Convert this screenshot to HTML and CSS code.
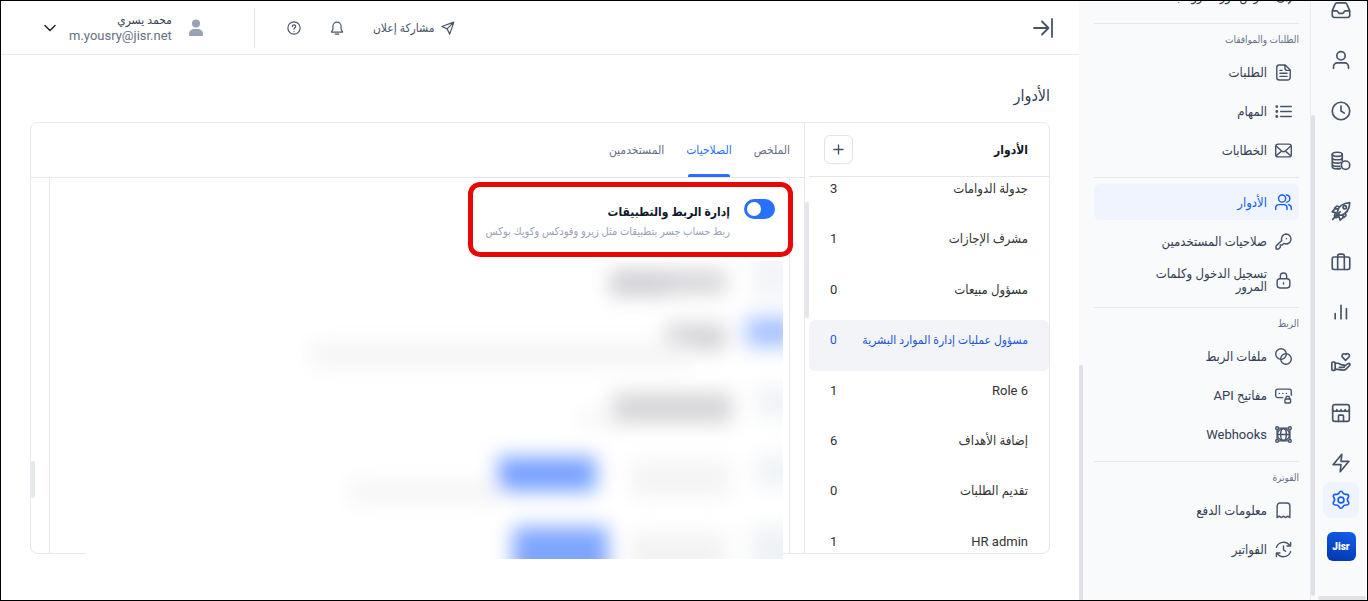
FILE: index.html
```html
<!DOCTYPE html>
<html lang="ar" dir="rtl">
<head>
    <meta charset="UTF-8">
    <meta name="viewport" content="width=device-width, initial-scale=1.0">
    <title>الأدوار</title>
    <link rel="stylesheet" href="styles.css">
</head>
<body>
    <nav class="rail" aria-label="التطبيقات">
        <div class="rail-list">
            <a href="#" aria-label="الوارد"><svg class="icon" viewBox="0 0 24 24"><path d="M1.500 13H7c1.500 0 1.500 3 3 3h4c1.500 0 1.500-3 3-3h5.500M7.500 3.500h9a3 3 0 0 1 2.800 2l3.200 7.500v5a3 3 0 0 1-3 3h-15a3 3 0 0 1-3-3v-5l3.200-7.500a3 3 0 0 1 2.800-2z"/></svg></a>
            <a href="#" aria-label="الموظفون"><svg class="icon" viewBox="0 0 24 24"><circle cx="12" cy="7" r="5"/><path d="M3 22v-2a4.500 4.500 0 0 1 4.500-4.500h9A4.500 4.500 0 0 1 21 20v2"/></svg></a>
            <a href="#" aria-label="الحضور"><svg class="icon" viewBox="0 0 24 24"><circle cx="12" cy="12" r="10.500"/><path d="M12 6v6l4 2.500"/></svg></a>
            <a href="#" aria-label="الرواتب"><svg class="icon" viewBox="0 0 24 24"><ellipse cx="7.500" cy="4" rx="6" ry="2.500"/><path d="M1.500 4v15c0 1.500 2.500 2.500 6 2.500 1.500 0 3-.2 4-.6M13.500 4v8M1.500 8c0 1.500 2.700 2.500 6 2.500s6-1 6-2.500M1.500 12c0 1.500 2.700 2.500 6 2.500 2 0 3.500-.3 4.500-.8M1.500 16c0 1.500 2.700 2.500 6 2.500h3"/><circle cx="17.500" cy="17" r="5"/></svg></a>
            <a href="#" aria-label="الأداء"><svg class="icon" viewBox="0 0 24 24"><path d="M8 12c1-5 6-9.500 14.500-10C22 10 18 15.500 12.500 17L7 17zM8 9.500H4.500L1.500 13l4 1M14.500 16.500V20l-3.500 3-1.500-4.500M9.500 7 7 6 4.500 8.500M17 14.500l1 3-2.500 2M2 22l9-9M5.500 14 4 18M9.500 18.500 6 20"/><circle cx="16.500" cy="7.500" r="2"/></svg></a>
            <a href="#" aria-label="التوظيف"><svg class="icon" viewBox="0 0 24 24"><rect x="1.500" y="6" width="21" height="15" rx="2"/><path d="M8 21V5c0-1.500 1-2.500 2.500-2.500h3C15 2.500 16 3.500 16 5v16"/></svg></a>
            <a href="#" aria-label="التقارير"><svg class="icon" viewBox="0 0 24 24"><path d="M5 20v-6M12 20V4M18.500 20V8"/></svg></a>
            <a href="#" aria-label="المزايا"><svg class="icon" viewBox="0 0 24 24"><rect x="1" y="12" width="4" height="10" rx="1"/><path d="M5 13.500h3c2.500 0 3.500 2 5 2h1.500c2.500 0 2.500 3 0 3H10M16 17l4.500-3c2-1 3 1 1.500 2.500l-4 4c-1 1-2 1.200-3.500 1.200L5 20.500M17.500 10 14 6.500C12 4 15 .5 17.500 3 20 .5 23.500 3.500 21.500 6z"/></svg></a>
            <a href="#" aria-label="المتجر"><svg class="icon" viewBox="0 0 24 24"><rect x="2" y="2" width="20" height="20" rx="2.500"/><path d="M2 8c0 2.500 5 2.500 5 0 0 2.500 5 2.500 5 0 0 2.500 5 2.500 5 0 0 2.500 5 2.500 5 0M9 22v-6.500a1 1 0 0 1 1-1h4a1 1 0 0 1 1 1V22"/></svg></a>
            <a href="#" aria-label="الأتمتة"><svg class="icon" viewBox="0 0 24 24"><path d="M13 1.500 2.500 14H12l-1 8.500L21.500 10H12z"/></svg></a>
        </div>
        <a class="rail-active" href="#" aria-label="الإعدادات"><svg class="icon" viewBox="0 0 24 24"><circle cx="12" cy="12" r="3.500"/><path d="M12 1.500c1.500 0 2 1.500 2.500 2.500 1 1.500 2.500 1.300 4 1.200 2.500-.2 3.500 2 2 4-1 1.500-1.500 2.800 0 4.600 1.800 2.200.6 4.400-2 4.200-1.800-.2-3 0-4 1.800-1.200 2.800-3.800 2.800-5 0-1-1.800-2.200-2-4-1.800-2.600.2-3.800-2-2-4.200 1.500-1.800 1-3.100 0-4.600-1.500-2-.5-4.200 2-4 1.500.1 3 .3 4-1.200.5-1 1-2.500 2.500-2.500z"/></svg></a>
        <a class="logo" href="#" dir="ltr">Jisr</a>
    </nav>

    <aside class="subnav">
        <section class="group first">
            <a class="item" href="#"><svg class="icon" viewBox="0 0 24 24"><circle cx="8" cy="14" r="6"/><path d="M13 7a6 6 0 1 1 3 11M19 22l3-3-3-3"/></svg>عرض دورة الرواتب</a>
        </section>
        <section class="group">
            <h2>الطلبات والموافقات</h2>
            <a class="item" href="#"><svg class="icon" viewBox="0 0 24 24"><path d="M14.500 1.500H6A3.500 3.500 0 0 0 2.500 5v14A3.500 3.500 0 0 0 6 22.500h12a3.500 3.500 0 0 0 3.500-3.500V8.500zM14 2v4a3 3 0 0 0 3 3h4M7 9h3M7 13h10M7 17.500h10"/></svg>الطلبات</a>
            <a class="item" href="#"><svg class="icon" viewBox="0 0 24 24"><path d="M8 5h15M8 12h15M8 19h15"/><path class="dots" d="M2.500 5h.1M2.500 12h.1M2.500 19h.1"/></svg>المهام</a>
            <a class="item" href="#"><svg class="icon" viewBox="0 0 24 24"><rect x="1" y="3" width="22" height="18" rx="3.500"/><path d="m2 6 7 6.500c2 1.500 4 1.500 6 0L22 6M2 19l6-5M22 19l-6-5"/></svg>الخطابات</a>
        </section>
        <section class="group">
            <a class="item active" href="#"><svg class="icon" viewBox="0 0 24 24"><circle cx="10" cy="6.500" r="5"/><path d="M1 22v-2.500A4.500 4.500 0 0 1 5.500 15h7a4.500 4.500 0 0 1 4.500 4.500V22M16 1.500a5 5 0 0 1 0 10M19 15a5 5 0 0 1 4 5v2"/></svg>الأدوار</a>
            <a class="item" href="#"><svg class="icon" viewBox="0 0 24 24"><path d="M15.500 1.500a7 7 0 1 1-3 13.300L10 17H7.500v3L5 22.500H1.500v-4l8-8a7 7 0 0 1 6-9zM16 8.200h.2"/></svg>صلاحيات المستخدمين</a>
            <a class="item" href="#"><svg class="icon" viewBox="0 0 24 24"><rect x="3" y="9.500" width="18" height="13" rx="4"/><path d="M7.500 9V6a4.500 4.500 0 0 1 9 0v3M12 15v2"/></svg>تسجيل الدخول وكلمات المرور</a>
        </section>
        <section class="group">
            <h2>الربط</h2>
            <a class="item" href="#"><svg class="icon" viewBox="0 0 24 24"><circle cx="8.500" cy="8.500" r="7.500"/><circle cx="15.500" cy="15.500" r="7.500"/></svg>ملفات الربط</a>
            <a class="item" href="#"><svg class="icon" viewBox="0 0 24 24"><path d="M11 15H3.500A2.500 2.500 0 0 1 1 12.500v-7A2.500 2.500 0 0 1 3.500 3h17A2.500 2.500 0 0 1 23 5.500v6M6 9h.2M11 9h.2M16 9h.2M15.500 17v-1.500a2.500 2.500 0 0 1 5 0V17"/><rect x="14" y="17" width="8" height="5.500" rx="1"/></svg>مفاتيح API</a>
            <a class="item" href="#"><svg class="icon" viewBox="0 0 24 24"><circle cx="12" cy="12" r="8.500"/><ellipse cx="12" cy="12" rx="4" ry="8.500"/><path d="M3.500 12h17M6 3h12M6 21h12M3 6v12M21 6v12"/><circle cx="3" cy="3" r="2"/><circle cx="21" cy="3" r="2"/><circle cx="3" cy="21" r="2"/><circle cx="21" cy="21" r="2"/></svg>Webhooks</a>
        </section>
        <section class="group">
            <h2>الفوترة</h2>
            <a class="item" href="#"><svg class="icon" viewBox="0 0 24 24"><path d="M3 22V5.500A4 4 0 0 1 7 1.500h10a4 4 0 0 1 4 4V22l-3-2-3 2-3-2-3 2-3-2z"/></svg>معلومات الدفع</a>
            <a class="item" href="#"><svg class="icon" viewBox="0 0 24 24"><path d="M2 9a10.500 10.500 0 0 1 19-2M22 15a10.500 10.500 0 0 1-19 2M2 22v-5h5M22 2v5h-5M12 7v5.500l3 2"/></svg>الفواتير</a>
        </section>
    </aside>

    <div class="main">
        <header class="topbar">
            <button class="plain" aria-label="طي القائمة"><svg class="icon collapse" viewBox="0 0 20 20"><path d="M1 10h14M9 3.500l6.500 6.500L9 16.500M19 1v18"/></svg></button>
            <div class="tools">
                <button class="plain share"><svg class="icon small" viewBox="0 0 24 24"><path d="M22 2 1.500 9.500l9 4zM22 2l-7 20.500-4.500-9z"/></svg>مشاركة إعلان</button>
                <button class="plain" aria-label="الإشعارات"><svg class="icon small" viewBox="0 0 24 24"><path d="M12 2a7 7 0 0 0-7 7v5l-2.500 5h19L19 14V9a7 7 0 0 0-7-7zM9 22.500h6"/></svg></button>
                <button class="plain" aria-label="المساعدة"><svg class="icon small" viewBox="0 0 24 24"><circle cx="12" cy="12" r="10.500"/><path d="M9 9.500c0-4 6-4 6 0 0 2-3 2-3 4.500M12 17.500v.2"/></svg></button>
            </div>
            <button class="plain user">
                <svg class="avatar" viewBox="0 0 14 18"><circle cx="7" cy="4.500" r="4"/><path d="M0 16v-1a5 5 0 0 1 5-5h4a5 5 0 0 1 5 5v1a1 1 0 0 1-1 1H1a1 1 0 0 1-1-1z"/></svg>
                <span class="who"><b>محمد يسري</b><span dir="ltr">m.yousry@jisr.net</span></span>
                <svg class="icon chevron" viewBox="0 0 12 12"><path d="m1 3.500 5 5 5-5"/></svg>
            </button>
        </header>

        <main class="content">
            <h1>الأدوار</h1>
            <div class="card">
                <section class="roles">
                    <div class="roles-head">
                        <h3>الأدوار</h3>
                        <button class="add" aria-label="إضافة دور"><svg class="icon" viewBox="0 0 12 12"><path d="M6 1v10M1 6h10"/></svg></button>
                    </div>
                    <div class="roles-scroll">
                        <div class="roles-list">
                            <a href="#"><span>جدولة الدوامات</span><span>3</span></a>
                            <a href="#"><span>مشرف الإجازات</span><span>1</span></a>
                            <a href="#"><span>مسؤول مبيعات</span><span>0</span></a>
                            <a href="#" class="selected"><span>مسؤول عمليات إدارة الموارد البشرية</span><span>0</span></a>
                            <a href="#"><span>Role 6</span><span>1</span></a>
                            <a href="#"><span>إضافة الأهداف</span><span>6</span></a>
                            <a href="#"><span>تقديم الطلبات</span><span>0</span></a>
                            <a href="#"><span>HR admin</span><span>1</span></a>
                        </div>
                    </div>
                </section>
                <section class="details">
                    <div class="tabs">
                        <button>الملخص</button>
                        <button class="current">الصلاحيات</button>
                        <button>المستخدمين</button>
                    </div>
                    <div class="panel">
                        <div class="permission">
                            <input type="checkbox" id="integrations" checked>
                            <label for="integrations">إدارة الربط والتطبيقات<small>ربط حساب جسر بتطبيقات مثل زيرو وفودكس وكويك بوكس</small></label>
                        </div>
                    </div>
                    <svg class="haze" viewBox="0 0 697 298" preserveAspectRatio="xMaxYMin slice" aria-hidden="true">
                        <defs><filter id="soft" x="-50%" y="-100%" width="200%" height="300%"><feGaussianBlur stdDeviation="10"/></filter></defs>
                        <g filter="url(#soft)">
                            <rect x="665" y="-10" width="60" height="50" fill="#f3f5f8"/>
                            <rect x="524" y="9" width="60" height="26" fill="#cfcfd5"/>
                            <rect x="584" y="9" width="56" height="24" fill="#d6d6da"/>
                            <rect x="660" y="56" width="50" height="30" fill="#a8c2ff"/>
                            <rect x="580" y="63" width="60" height="26" fill="#d2d2d6"/>
                            <rect x="225" y="81" width="380" height="26" fill="#f5f5f6"/>
                            <rect x="670" y="125" width="40" height="32" fill="#f0f3f7"/>
                            <rect x="527" y="132" width="119" height="30" fill="#d5d5d9"/>
                            <rect x="492" y="150" width="35" height="16" fill="#f6f6f7"/>
                            <rect x="412" y="196" width="98" height="34" fill="#76a0ff"/>
                            <rect x="545" y="200" width="100" height="36" fill="#f4f4f5"/>
                            <rect x="670" y="193" width="40" height="34" fill="#f0f3f7"/>
                            <rect x="262" y="220" width="150" height="22" fill="#f5f5f6"/>
                            <rect x="427" y="266" width="95" height="60" fill="#7ea5ff"/>
                            <rect x="545" y="272" width="95" height="54" fill="#f3f3f4"/>
                            <rect x="665" y="265" width="50" height="60" fill="#eff2f6"/>
                        </g>
                    </svg>
                </section>
            </div>
        </main>
    </div>
</body>
</html>
```

FILE: styles.css
```css
*, *::before, *::after {
    box-sizing: border-box;
}
body {
    margin: 0;
    height: 100vh;
    display: flex;
    overflow: hidden;
    border: 1px solid #000;
    background-color: #fff;
    color: #344054;
    font-family: Roboto, "DejaVu Sans Condensed", "DejaVu Sans", sans-serif;
    font-size: 13px;
}
a {
    color: inherit;
    text-decoration: none;
}
button {
    font: inherit;
    color: inherit;
    cursor: pointer;
}
h1, h2, h3 {
    margin: 0;
}
.icon {
    width: 20px;
    height: 20px;
    flex: none;
    fill: none;
    stroke: #475467;
    stroke-width: 2;
    stroke-linecap: round;
    stroke-linejoin: round;
}
.plain {
    display: flex;
    align-items: center;
    padding: 0;
    border: none;
    background: none;
}

/* right icon rail */
.rail {
    position: relative;
    flex: none;
    width: 56px;
    padding-left: 4px;
    display: flex;
    flex-direction: column;
    align-items: center;
    background-color: #f9fafc;
}
.rail::before {
    content: "";
    position: absolute;
    top: 114px;
    bottom: 4px;
    right: 52px;
    width: 4px;
    border-radius: 3px;
    background-color: #dfe0e8;
}
.rail::after {
    content: "";
    position: absolute;
    right: 1px;
    bottom: 0;
    width: 48px;
    height: 4px;
    border-radius: 3px;
    background-color: #dfe0e8;
}
.rail-list {
    flex: none;
    margin-top: -16px;
    height: 503px;
    display: grid;
    grid-auto-rows: 1fr;
    align-items: center;
}
.rail-list a {
    display: flex;
}
.rail-active {
    flex: none;
    display: flex;
    align-items: center;
    justify-content: center;
    width: 36px;
    height: 36px;
    margin-top: -6px;
    border-radius: 8px;
    background-color: #eff4ff;
}
.rail-active .icon {
    stroke: #155eef;
}
.logo {
    flex: none;
    width: 29px;
    margin-top: 14px;
    border-radius: 6px;
    background: linear-gradient(200deg, #155eef, #0036a8);
    color: #fff;
    font-size: 10px;
    font-weight: 900;
    line-height: 29px;
    text-align: center;
}

/* settings menu */
.subnav {
    flex: none;
    width: 232px;
    padding: 0 11px 0 15px;
    border-right: 1px solid #e9eaf0;
    background-color: #f9fafc;
}
.group {
    padding: 6px 0 9px;
    display: flex;
    flex-direction: column;
    gap: 3px;
    border-top: 1px solid #e4e7ec;
}
.group.first {
    margin-top: -30px;
}
.group h2 {
    height: 21px;
    color: #667085;
    font-size: 10px;
    font-weight: 400;
    line-height: 20px;
}
.item {
    display: flex;
    align-items: center;
    gap: 8px;
    height: 36px;
    padding: 0 7px 0 28px;
    border-radius: 6px;
    line-height: 13px;
}
.item .icon {
    width: 17px;
    height: 17px;
}
.item .dots {
    stroke-width: 4;
}
.item.active {
    background-color: #eff4ff;
    color: #155eef;
}
.item.active .icon {
    stroke: #155eef;
}

/* top bar */
.main {
    position: relative;
    flex: 1;
    min-width: 0;
}
.main::after {
    content: "";
    position: absolute;
    left: 100%;
    top: 364px;
    bottom: 0;
    width: 4px;
    border-radius: 3px 3px 0 0;
    background-color: #dfe0e8;
}
.topbar {
    display: flex;
    align-items: center;
    height: 54px;
    padding: 0 26px 0 43px;
    border-bottom: 1px solid #e9eaed;
}
.collapse {
    stroke-width: 1.8;
}
.tools {
    display: flex;
    align-items: center;
    gap: 29px;
    margin-right: auto;
    padding-left: 32px;
}
.small {
    width: 14px;
    height: 14px;
}
.share {
    gap: 6px;
    color: #475467;
    font-size: 12px;
}
.user {
    height: 40px;
    padding-right: 51px;
    border-right: 1px solid #e0e4ea;
}
.avatar {
    width: 14px;
    height: 18px;
    fill: #98a2b3;
}
.who {
    display: flex;
    flex-direction: column;
    margin-right: 17px;
    color: #667085;
    line-height: 15px;
}
.who b {
    color: #344054;
    font-size: 12px;
    font-weight: 400;
    text-align: right;
}
.chevron {
    width: 12px;
    height: 12px;
    margin-right: 13px;
    stroke: #1d2939;
    stroke-width: 1.5;
}

/* page */
.content {
    padding: 28px 29px 0;
}
h1 {
    height: 39px;
    font-size: 16px;
    font-weight: 500;
    line-height: 26px;
}
.card {
    display: flex;
    height: 432px;
    border: 1px solid #e7e9ed;
    border-radius: 8px;
}
.roles {
    position: relative;
    flex: none;
    display: flex;
    flex-direction: column;
    width: 245px;
    padding-left: 4px;
    border-left: 1px solid #e4e7ec;
}
.roles::after {
    content: "";
    position: absolute;
    left: 0;
    top: 79px;
    width: 4px;
    height: 116px;
    border-radius: 3px;
    background-color: #e4e7ec;
}
.roles-head {
    display: flex;
    align-items: center;
    justify-content: space-between;
    height: 54px;
    padding: 0 21px 0 15px;
    border-bottom: 1px solid #e4e7ec;
}
.roles-head h3 {
    color: #101828;
    font-size: 12px;
}
.add {
    display: flex;
    align-items: center;
    justify-content: center;
    width: 29px;
    height: 29px;
    padding: 0;
    border: 1px solid #e0e4ea;
    border-radius: 6px;
    background-color: #fff;
}
.add .icon {
    width: 11px;
    height: 11px;
    stroke-width: 1.5;
}
.roles-scroll {
    flex: 1;
    overflow: hidden;
}
.roles-list {
    display: grid;
    grid-auto-rows: 1fr;
    height: 403px;
    margin-top: -8px;
}
.roles-list a {
    display: flex;
    justify-content: space-between;
    padding: 10px 21px 0 21px;
    border-radius: 6px;
    color: #333;
    line-height: 20px;
    white-space: nowrap;
}
.roles-list .selected {
    background-color: #f2f4f7;
    color: #1d55d8;
    font-size: 12px;
}
.details {
    position: relative;
    flex: 1;
    min-width: 0;
    display: flex;
    flex-direction: column;
}
.tabs {
    display: flex;
    gap: 22px;
    height: 55px;
    padding-right: 14px;
    border-bottom: 1px solid #e4e7ec;
}
.tabs button {
    position: relative;
    padding: 0;
    border: none;
    background: none;
    color: #667085;
    font-size: 12px;
}
.tabs .current {
    color: #2970ff;
}
.tabs .current::after {
    content: "";
    position: absolute;
    right: 2px;
    left: 2px;
    bottom: 0;
    height: 3px;
    border-radius: 2px 2px 0 0;
    background-color: #2970ff;
}
.panel {
    flex: 1;
    margin: 0 14px 0 18px;
    border: 1px solid #e7e9ed;
    border-width: 0 1px;
}
.details::after {
    content: "";
    position: absolute;
    left: 0;
    top: 338px;
    width: 4px;
    height: 37px;
    border-radius: 3px;
    background-color: #e4e7ec;
}
.permission {
    position: relative;
    z-index: 1;
    display: flex;
    align-items: flex-start;
    gap: 14px;
    padding: 21px 14px 0 0;
}
/* red callout round the permission */
.permission::after {
    content: "";
    position: absolute;
    top: 4px;
    right: -4px;
    width: 325px;
    height: 75px;
    border: 5px solid #e90808;
    border-radius: 12px;
    pointer-events: none;
}
.permission input {
    appearance: none;
    width: 31px;
    height: 20px;
    margin: 0;
    padding: 3px;
    border-radius: 10px;
    background-color: #d0d5dd;
}
.permission input::before {
    content: "";
    display: block;
    width: 14px;
    height: 14px;
    border-radius: 50%;
    background-color: #fff;
}
.permission input:checked {
    background-color: #2970ff;
}
.permission input:checked::before {
    margin-right: auto;
}
.permission label {
    padding-top: 3px;
    color: #101828;
    font-size: 12px;
    font-weight: 700;
    line-height: 20px;
}
.permission small {
    display: block;
    color: #98a2b3;
    font-size: 11px;
    font-weight: 400;
}
.haze {
    position: absolute;
    left: 55px;
    bottom: -6px;
    height: 298px;
    width: calc(100% - 76px);
    background-color: #fff;
}
```
